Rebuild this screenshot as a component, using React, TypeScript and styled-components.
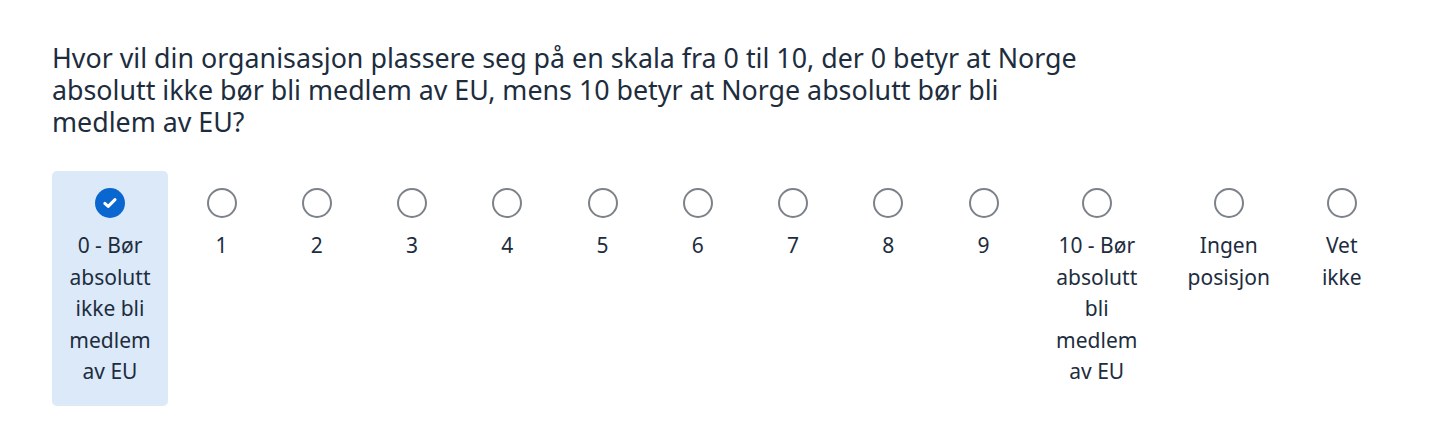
import styled, { createGlobalStyle } from "styled-components";

const GlobalStyle = createGlobalStyle`
  body {
    margin: 0;
    background: #fff;
    font-family: "Noto Sans", "Open Sans", sans-serif;
    color: #1d2d3e;
  }
`;

const Page = styled.div`
  padding: 42px 0 0 52px;
`;

const Question = styled.p`
  margin: 0;
  font-size: 26.8px;
  line-height: 32px;
  color: #1d2d3e;
  white-space: nowrap;
`;

const Scale = styled.div`
  display: grid;
  grid-template-columns: 122px repeat(9, 95.25px) 131px 133px 93px;
  margin-top: 33px;
  align-items: start;
`;

const Option = styled.div<{ $selected?: boolean }>`
  display: flex;
  flex-direction: column;
  align-items: center;
  width: ${(p) => (p.$selected ? "116px" : "auto")};
  padding: 17px 0 ${(p) => (p.$selected ? "18px" : "0")};
  border-radius: 5px;
  background: ${(p) => (p.$selected ? "#dce9f8" : "transparent")};
  cursor: pointer;
`;

const Radio = styled.span<{ $checked?: boolean }>`
  box-sizing: border-box;
  display: flex;
  align-items: center;
  justify-content: center;
  width: 30px;
  height: 30px;
  border-radius: 50%;
  border: ${(p) => (p.$checked ? "none" : "2px solid #7c828a")};
  background: ${(p) => (p.$checked ? "#0a67d0" : "#fff")};
`;

const Label = styled.span`
  margin-top: 12px;
  font-size: 21px;
  line-height: 31.5px;
  text-align: center;
  white-space: pre-line;
  color: #1d2d3e;
`;

const options = [
  "0 - Bør\nabsolutt\nikke bli\nmedlem\nav EU",
  "1",
  "2",
  "3",
  "4",
  "5",
  "6",
  "7",
  "8",
  "9",
  "10 - Bør\nabsolutt\nbli\nmedlem\nav EU",
  "Ingen\nposisjon",
  "Vet\nikke",
];

const Check = () => (
  <svg width="18" height="18" viewBox="0 0 18 18">
    <path
      d="M3.8 9.4 L7.2 12.4 L14 5.6"
      fill="none"
      stroke="#fff"
      strokeWidth="3"
      strokeLinecap="round"
      strokeLinejoin="round"
    />
  </svg>
);

export default function App() {
  return (
    <Page>
      <GlobalStyle />
      <Question>
        Hvor vil din organisasjon plassere seg på en skala fra 0 til 10, der 0
        betyr at Norge
        <br />
        absolutt ikke bør bli medlem av EU, mens 10 betyr at Norge absolutt bør
        bli
        <br />
        medlem av EU?
      </Question>
      <Scale>
        {options.map((o, i) => (
          <Option key={o} $selected={i === 0}>
            <Radio $checked={i === 0}>{i === 0 && <Check />}</Radio>
            <Label>{o}</Label>
          </Option>
        ))}
      </Scale>
    </Page>
  );
}
